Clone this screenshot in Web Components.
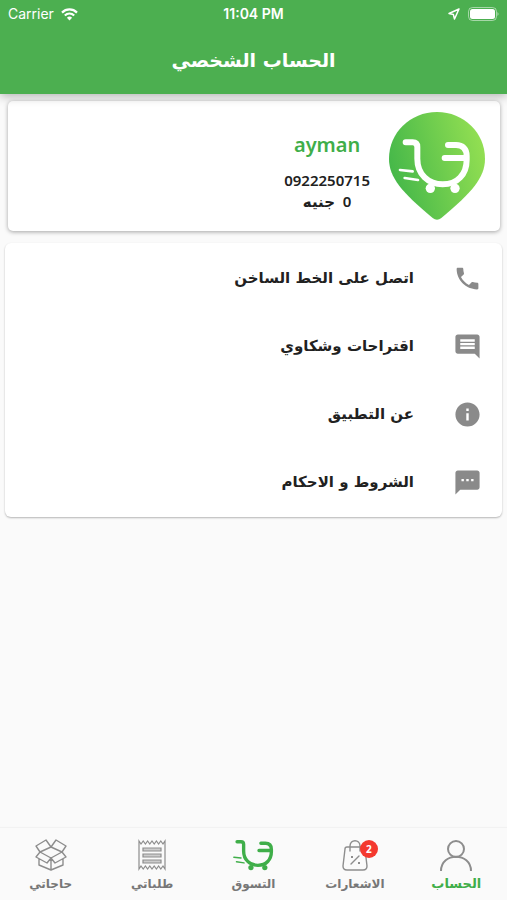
<!DOCTYPE html>
<html lang="ar" dir="rtl">
<head>
<meta charset="utf-8">
<meta name="viewport" content="width=device-width, initial-scale=1">
<title>الحساب الشخصي</title>
<style>
  html, body { margin: 0; height: 100%; }
  body {
    background: #fafafa;
    color: #212121;
    font-family: "Noto Sans", "DejaVu Sans", sans-serif;
  }
</style>
</head>
<body>
<account-page></account-page>

<script>
const define = (name, html) => {
  const template = document.createElement('template');
  template.innerHTML = html;
  customElements.define(name, class extends HTMLElement {
    constructor() {
      super();
      this.attachShadow({ mode: 'open' }).append(template.content.cloneNode(true));
    }
  });
};

const cart = `
  <g fill="none" stroke="currentColor" stroke-linecap="round" stroke-linejoin="round">
    <path stroke-width="18" d="M77 111H98Q112 111 112 125V160C112 207 145 237 188 237C232 237 260 207 260 163V152C260 130 248 119 228 119H204M194 158H256"/>
    <path stroke-width="8" d="M60 194L98 198M74 218L114 224"/>
  </g>
  <g fill="currentColor"><circle cx="151" cy="249" r="14"/><circle cx="225" cy="249" r="14"/></g>`;

define('status-bar', `
  <style>
    :host { display: grid; grid-template-columns: 1fr auto 1fr; align-items: center; height: 28px; padding: 0 8px;
      color: #fff; font-family: Inter, "Liberation Sans", sans-serif; font-size: 14px; line-height: 28px; direction: ltr; }
    div { display: flex; align-items: center; gap: 7px; }
    .end { justify-content: flex-end; gap: 8px; }
    time { font-weight: 600; }
    svg { display: block; }
  </style>
  <div><span>Carrier</span>
    <svg width="17" height="13" viewBox="0 0 17 13" fill="none" stroke="#fff" stroke-width="2.2"><path d="M1 4.6C5.2.4 11.8.4 16 4.6M3.8 7.5C6.5 5 10.5 5 13.2 7.5"/><path d="M5.9 9.8Q8.5 7.4 11.1 9.8L8.5 12.5Z" fill="#fff" stroke="none"/></svg>
  </div>
  <time>11:04 PM</time>
  <div class="end">
    <svg width="12" height="12" viewBox="0 0 12 12" fill="none" stroke="#fff" stroke-width="1.5" stroke-linejoin="round"><path d="M11 1L1 5.5L5.400 6.600L6.500 11Z"/></svg>
    <svg width="31" height="14" viewBox="0 0 31 14"><rect x=".5" y=".5" width="28" height="13" rx="4" fill="none" stroke="#fff" stroke-opacity=".5"/><rect x="2" y="2" width="25" height="10" rx="2.5" fill="#fff"/><path d="M29.500 5Q31.500 7 29.500 9Z" fill="#fff" fill-opacity=".6"/></svg>
  </div>`);

define('app-header', `
  <style>
    :host { display: block; background: #4caf50; color: #fff; box-shadow: 0 2px 10px rgba(0,0,0,.3); position: relative; z-index: 1; }
    h1 { margin: 0; padding: 0 0 2px; font: 700 19px/64px "DejaVu Sans", sans-serif; text-align: center; }
  </style>
  <status-bar></status-bar>
  <h1><slot></slot></h1>`);

define('brand-pin', `
  <style>:host { display: block; color: #fff; } svg { display: block; }</style>
  <svg width="96" height="108" viewBox="27 20 288 324" role="img" aria-label="logo">
    <defs><linearGradient id="g" x1="0" y1=".65" x2="1" y2=".35"><stop offset="0" stop-color="#42b649"/><stop offset="1" stop-color="#93df52"/></linearGradient></defs>
    <path fill="url(#g)" d="M171 20C252 20 315 83 315 160C315 216 277 260 184 338Q171 348 158 338C65 260 27 216 27 160C27 83 90 20 171 20Z"/>
    ${cart}
  </svg>`);

define('profile-card', `
  <style>
    :host { display: flex; align-items: center; gap: 19px; box-sizing: border-box; margin: 7px 7px 0 8px; min-height: 130px;
      padding: 0 15px; background: #fff; border-radius: 5px; box-shadow: 0 1px 4px rgba(0,0,0,.35); }
    div { display: flex; flex-direction: column; align-items: center; padding-top: 13px; font: 600 15px/21px "Noto Sans", "DejaVu Sans", sans-serif; }
    h2 { margin: 0 0 13px; color: #3fae49; font-size: 20px; line-height: 24px; font-weight: 600; }
  </style>
  <brand-pin></brand-pin>
  <div>
    <h2><slot name="name"></slot></h2>
    <slot name="phone"></slot>
    <slot name="balance"></slot>
  </div>`);

define('menu-card', `
  <style>
    :host { display: block; margin: 12px 5px 0; background: #fff; border-radius: 6px; box-shadow: 0 1px 2px rgba(0,0,0,.28); padding: 1px 0; }
  </style>
  <slot></slot>`);

define('menu-row', `
  <style>
    :host { display: block; }
    button { display: flex; align-items: center; gap: 39px; width: 100%; height: 68px; padding: 0 20px; border: 0; background: none;
      color: inherit; font: 700 15px/24px "DejaVu Sans", sans-serif; text-align: start; cursor: pointer; }
    ::slotted(svg) { display: block; width: 29px; height: 29px; fill: #8a8a8a; }
  </style>
  <button type="button"><slot name="icon"></slot><slot></slot></button>`);

define('tab-item', `
  <style>
    :host { display: block; flex: 1 1 0; min-width: 0; color: #777; --size: 12px; }
    :host([active]) { color: #3fae49; --size: 13px; }
    a { display: flex; flex-direction: column; align-items: center; gap: 2px; color: inherit; text-decoration: none;
      font: 700 var(--size)/20px "DejaVu Sans", sans-serif; }
    .icon { position: relative; display: block; height: 34px; }
    ::slotted(svg) { display: block; height: 34px; fill: none; stroke: #8d8d8d; }
    ::slotted(b) { position: absolute; top: 2px; left: 22px; width: 18px; height: 18px; border-radius: 50%; background: #f4392f;
      color: #fff; font: 700 10px/18px "Noto Sans", sans-serif; text-align: center; }
  </style>
  <a href="#"><span class="icon"><slot name="icon"></slot><slot name="badge"></slot></span><slot></slot></a>`);

define('tab-bar', `
  <style>
    :host { display: block; background: #fafafa; box-shadow: 0 -1px 1px rgba(0,0,0,.03); }
    nav { display: flex; padding: 10px 0 6px; }
  </style>
  <nav><slot></slot></nav>`);

define('account-page', `
  <style>
    :host { display: flex; flex-direction: column; min-height: 100%; }
    main { flex: 1; }
  </style>
  <app-header>الحساب الشخصي</app-header>
  <main>
    <profile-card>
      <span slot="name">ayman</span>
      <span slot="phone">0922250715</span>
      <span slot="balance">0&nbsp; جنيه</span>
    </profile-card>
    <menu-card>
      <menu-row><svg slot="icon" viewBox="0 0 24 24"><path d="M6.62 10.79c1.44 2.83 3.76 5.14 6.59 6.59l2.2-2.2c.27-.27.67-.36 1.02-.24 1.12.37 2.33.57 3.57.57.55 0 1 .45 1 1V20c0 .55-.45 1-1 1-9.39 0-17-7.61-17-17 0-.55.45-1 1-1h3.500c.55 0 1 .45 1 1 0 1.25.2 2.45.57 3.57.11.35.03.74-.25 1.02l-2.2 2.2z"/></svg>اتصل على الخط الساخن</menu-row>
      <menu-row><svg slot="icon" viewBox="0 0 24 24"><path d="M21.99 4c0-1.1-.89-2-1.99-2H4c-1.1 0-2 .9-2 2v12c0 1.1.9 2 2 2h14l4 4-.01-18zM18 14H6v-2h12v2zm0-3H6V9h12v2zm0-3H6V6h12v2z"/></svg>اقتراحات وشكاوي</menu-row>
      <menu-row><svg slot="icon" viewBox="0 0 24 24"><path d="M12 2C6.48 2 2 6.48 2 12s4.48 10 10 10 10-4.48 10-10S17.52 2 12 2zm1 15h-2v-6h2v6zm0-8h-2V7h2v2z"/></svg>عن التطبيق</menu-row>
      <menu-row><svg slot="icon" viewBox="0 0 24 24"><path d="M20 2H4c-1.1 0-1.99.9-1.99 2L2 22l4-4h14c1.1 0 2-.9 2-2V4c0-1.1-.9-2-2-2zM9 11H7V9h2v2zm4 0h-2V9h2v2zm4 0h-2V9h2v2z"/></svg>الشروط و الاحكام</menu-row>
    </menu-card>
  </main>
  <tab-bar>
    <tab-item active><svg slot="icon" width="34" viewBox="0 0 34 34" stroke-width="2"><circle cx="17" cy="11" r="8"/><path d="M2 33C2 14 32 14 32 33"/></svg>الحساب</tab-item>
    <tab-item><svg slot="icon" width="34" viewBox="0 0 34 34" stroke-width="1.4"><path d="M9 9H25Q27 9 27 11L29 28Q29 32 25 32H9Q5 32 5 28L7 11Q7 9 9 9Z"/><path d="M12 13V8C12 1 22 1 22 8V13M13 26L21 18" stroke-linecap="round"/><path d="M13 19h2M20 25h2" stroke-width="2"/></svg><b slot="badge">2</b>الاشعارات</tab-item>
    <tab-item><svg slot="icon" width="42" viewBox="50 94 224 176" style="color:#3fae49"><g stroke="none">${cart.replace('stroke="currentColor"', 'stroke="#3fae49"')}</g></svg>التسوق</tab-item>
    <tab-item><svg slot="icon" width="28" viewBox="0 0 28 34" stroke-width="1.2"><path d="M1 3l2 3 2.200-3 2.200 3 2.200-3 2.200 3 2.200-3 2.200 3 2.200-3 2.200 3 2.200-3 2.200 3 2-3V31l-2-3-2.200 3-2.200-3-2.200 3-2.200-3-2.200 3-2.200-3-2.200 3-2.200-3-2.200 3-2.200-3-2 3Z"/><path d="M5 10H23V13H5ZM5 16H23V19H5ZM5 22H23V25H5Z" fill="#ccc"/></svg>طلباتي</tab-item>
    <tab-item><svg slot="icon" width="34" viewBox="0 0 34 34" stroke-width="1.4" stroke-linejoin="round"><path d="M17 9L28 14L17 20L6 14ZM17 9L12 2L2 8L6 14L2 19L13 25L17 20L21 25L32 19L28 14L32 8L22 2ZM5 21V27L17 32L29 27V21M17 20V32"/></svg>حاجاتي</tab-item>
  </tab-bar>`);
</script>
</body>
</html>
